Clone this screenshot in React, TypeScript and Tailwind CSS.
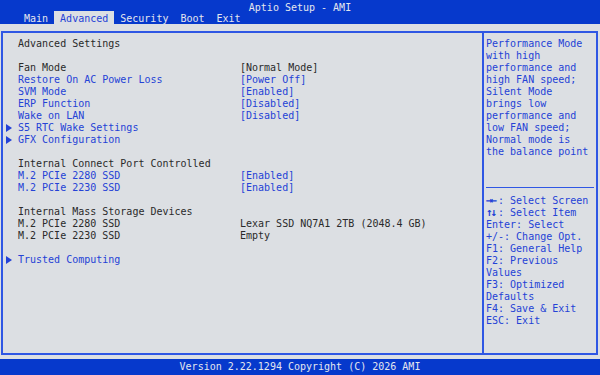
import React from "react";

type Row =
  | { kind: "blank" }
  | { kind: "title"; text: string }
  | { kind: "item"; label: string; value?: string; link?: boolean; sub?: boolean; valueDark?: boolean };

const rows: Row[] = [
  { kind: "title", text: "Advanced Settings" },
  { kind: "blank" },
  { kind: "item", label: "Fan Mode", value: "[Normal Mode]", valueDark: true },
  { kind: "item", label: "Restore On AC Power Loss", value: "[Power Off]", link: true },
  { kind: "item", label: "SVM Mode", value: "[Enabled]", link: true },
  { kind: "item", label: "ERP Function", value: "[Disabled]", link: true },
  { kind: "item", label: "Wake on LAN", value: "[Disabled]", link: true },
  { kind: "item", label: "S5 RTC Wake Settings", link: true, sub: true },
  { kind: "item", label: "GFX Configuration", link: true, sub: true },
  { kind: "blank" },
  { kind: "title", text: "Internal Connect Port Controlled" },
  { kind: "item", label: "M.2 PCIe 2280 SSD", value: "[Enabled]", link: true },
  { kind: "item", label: "M.2 PCIe 2230 SSD", value: "[Enabled]", link: true },
  { kind: "blank" },
  { kind: "title", text: "Internal Mass Storage Devices" },
  { kind: "item", label: "M.2 PCIe 2280 SSD", value: "Lexar SSD NQ7A1 2TB (2048.4 GB)", valueDark: true },
  { kind: "item", label: "M.2 PCIe 2230 SSD", value: "Empty", valueDark: true },
  { kind: "blank" },
  { kind: "item", label: "Trusted Computing", link: true, sub: true },
];

const helpLines = [
  "Performance Mode",
  "with high",
  "performance and",
  "high FAN speed;",
  "Silent Mode",
  "brings low",
  "performance and",
  "low FAN speed;",
  "Normal mode is",
  "the balance point",
];

// [glyph prefix, rest]
const keyLines: [string, string][] = [
  ["→←", ": Select Screen"],
  ["↑↓", ": Select Item"],
  ["", "Enter: Select"],
  ["", "+/-: Change Opt."],
  ["", "F1: General Help"],
  ["", "F2: Previous"],
  ["", "Values"],
  ["", "F3: Optimized"],
  ["", "Defaults"],
  ["", "F4: Save & Exit"],
  ["", "ESC: Exit"],
];

const tabs = ["Main", "Advanced", "Security", "Boot", "Exit"];

function Arrow() {
  return (
    <svg width="6" height="8" viewBox="0 0 6 8" className="block">
      <polygon points="0,0 6,4 0,8" fill="#2442d6" />
    </svg>
  );
}

export default function App() {
  return (
    <div className="flex h-[375px] w-[600px] flex-col overflow-hidden bg-[#dcdfe3] font-['DejaVu_Sans_Mono',monospace] text-[10px] leading-[12px] whitespace-pre">
      <div className="flex h-[24px] flex-col bg-[#0639cc] text-[#e4e6ee]">
        <div className="h-[11px] text-center leading-[15px]">Aptio Setup - AMI</div>
        <div className="flex h-[13px] pl-[18px]">
          {tabs.map((t) => (
            <div
              key={t}
              className={
                t === "Advanced"
                  ? "bg-[#dcdfe3] px-[6px] leading-[15px] text-[#2442d6]"
                  : "px-[6px] leading-[15px]"
              }
            >
              {t}
            </div>
          ))}
        </div>
      </div>

      <div className="pl-[1px] pt-[7px]">
        <div className="flex h-[324px] w-[597px] border-2 border-[#2f57e4]">
          <div className="w-[481px] border-r-2 border-[#2f57e4] pt-[5px]">
            {rows.map((r, i) => {
              if (r.kind === "blank") return <div key={i} className="h-[12px]" />;
              if (r.kind === "title")
                return (
                  <div key={i} className="flex h-[12px] pl-[15px] text-[#2a2a2a]">
                    {r.text}
                  </div>
                );
              return (
                <div key={i} className="flex h-[12px] items-center">
                  <div className="flex w-[15px] pl-[3px]">{r.sub && <Arrow />}</div>
                  <div className={r.link ? "w-[222px] text-[#2442d6]" : "w-[222px] text-[#2a2a2a]"}>
                    {r.label}
                  </div>
                  {r.value && (
                    <div className={r.valueDark ? "text-[#2a2a2a]" : "text-[#2442d6]"}>{r.value}</div>
                  )}
                </div>
              );
            })}
          </div>
          <div className="flex flex-1 flex-col pl-[2px] pr-[2px] pt-[5px] text-[#2442d6]">
            <div className="h-[143px]">
              {helpLines.map((l, i) => (
                <div key={i} className="h-[12px]">
                  {l}
                </div>
              ))}
            </div>
            <div className="flex h-[12px] items-center">
              <div className="h-[1px] w-full bg-[#2f57e4]" />
            </div>
            <div className="mt-[2px]">
              {keyLines.map(([g, rest], i) => (
                <div key={i} className="flex h-[12px]">
                  {g && <span className="w-[12px] text-[11px] font-bold tracking-[-2px]">{g}</span>}
                  <span>{rest}</span>
                </div>
              ))}
            </div>
          </div>
        </div>
      </div>

      <div className="mt-auto flex h-[16px] items-center justify-center bg-[#0639cc] text-[#e4e6ee]">
        Version 2.22.1294 Copyright (C) 2026 AMI
      </div>
    </div>
  );
}
